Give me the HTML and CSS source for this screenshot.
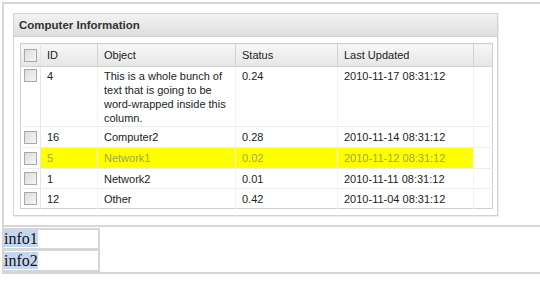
FILE: index.html
```html
<!DOCTYPE html>
<html>
<head>
<meta charset="utf-8">
<link rel="stylesheet" href="styles.css">
</head>
<body>
<div class="frame">
  <div class="top">
    <div class="panel">
      <div class="panel-head">Computer Information</div>
      <div class="panel-body">
        <table class="grid">
          <colgroup>
            <col class="c-chk"><col class="c-id"><col class="c-obj"><col class="c-st"><col class="c-up"><col class="c-fill">
          </colgroup>
          <thead>
            <tr>
              <th class="chk"><span class="box"></span></th>
              <th>ID</th><th>Object</th><th>Status</th><th>Last Updated</th><th class="fill"></th>
            </tr>
          </thead>
          <tbody>
            <tr class="tall">
              <td class="chk"><span class="box"></span></td>
              <td>4</td><td>This is a whole bunch of text that is going to be word-wrapped inside this column.</td><td>0.24</td><td>2010-11-17 08:31:12</td><td class="fill"></td>
            </tr>
            <tr>
              <td class="chk"><span class="box"></span></td>
              <td>16</td><td>Computer2</td><td>0.28</td><td>2010-11-14 08:31:12</td><td class="fill"></td>
            </tr>
            <tr class="hl">
              <td class="chk"><span class="box"></span></td>
              <td>5</td><td>Network1</td><td>0.02</td><td>2010-11-12 08:31:12</td><td class="fill"></td>
            </tr>
            <tr class="short">
              <td class="chk"><span class="box"></span></td>
              <td>1</td><td>Network2</td><td>0.01</td><td>2010-11-11 08:31:12</td><td class="fill"></td>
            </tr>
            <tr class="short last">
              <td class="chk"><span class="box"></span></td>
              <td>12</td><td>Other</td><td>0.42</td><td>2010-11-04 08:31:12</td><td class="fill"></td>
            </tr>
          </tbody>
        </table>
      </div>
    </div>
  </div>
  <div class="bottom">
    <div class="info"><span class="sel">info1</span></div>
    <div class="info"><span class="sel">info2</span></div>
  </div>
</div>
</body>
</html>
```
FILE: styles.css
```css
html, body {
  margin: 0;
  padding: 0;
  background: #fff;
}
.frame {
  margin: 2px 0 0 2px;
  border-top: 2px solid #d6d6d6;
  border-left: 2px solid #d6d6d6;
  border-bottom: 2px solid #d6d6d6;
}
.top {
  padding: 9px 0 9px 9px;
  border-bottom: 2px solid #d6d6d6;
}
.panel {
  width: 483px;
  border: 1px solid #d3d3d3;
  box-shadow: 1px 1px 0 #ececec;
  background: #fff;
  font-family: "Liberation Sans", Arial, sans-serif;
  font-size: 11px;
  color: #222;
}
.panel-head {
  height: 22px;
  line-height: 23px;
  padding-left: 5px;
  font-weight: bold;
  font-size: 11.5px;
  color: #333;
  background: linear-gradient(#f3f3f3, #dedede);
  border-bottom: 1px solid #d0d0d0;
}
.panel-body {
  padding: 6px 5px 6px 6px;
}
.grid {
  border-collapse: collapse;
  width: 472px;
  table-layout: fixed;
  border: 1px solid #cfcfcf;
}
.c-chk { width: 20px; }
.c-id { width: 57px; }
.c-obj { width: 138px; }
.c-st { width: 102px; }
.c-up { width: 136px; }
.c-fill { width: 19px; }
.grid th {
  height: 22px;
  text-align: left;
  font-weight: normal;
  padding: 0 6px;
  background: linear-gradient(#f7f7f7, #e6e6e6);
  border-right: 1px solid #d2d2d2;
  border-bottom: 1px solid #d2d2d2;
  color: #222;
}
.grid th.fill { border-right: none; }
.grid td {
  height: 20px;
  padding: 0 6px;
  vertical-align: middle;
  border-bottom: 1px solid #ececec;
  border-right: 1px solid #f3f3f3;
  line-height: 14px;
}
.grid tr.short td { height: 19px; }
.grid td.chk, .grid th.chk {
  padding: 0 0 0 3px;
  border-right: 1px solid #e6e6e6;
}
.grid td.fill { border-right: none; }
.grid tr.tall td {
  vertical-align: top;
  padding-top: 2px;
  padding-bottom: 1px;
  height: 54px;
}
.grid tr.tall td.chk { padding-top: 2px; }
.grid tr.last td { border-bottom: none; }
.grid tr.hl td {
  background: #ffff00;
  color: #a3a35a;
}
.grid tr.hl td.chk, .grid tr.hl td.fill {
  background: #fff;
}
.box {
  display: block;
  width: 11px;
  height: 11px;
  border: 1px solid #a9a9a9;
  background: linear-gradient(135deg, #dcdcdc, #f6f6f6);
}
.bottom {
  padding-top: 1px;
}
.info {
  width: 94px;
  height: 18px;
  border: 2px solid #d6d6d6;
  border-left: none;
  font-family: "Liberation Serif", "Times New Roman", serif;
  font-size: 16px;
  line-height: 18px;
  color: #111;
}
.info + .info {
  border-top: 1px solid #d6d6d6;
  height: 19px;
  line-height: 19px;
}
.sel {
  background: #c5d6f0;
}
```
